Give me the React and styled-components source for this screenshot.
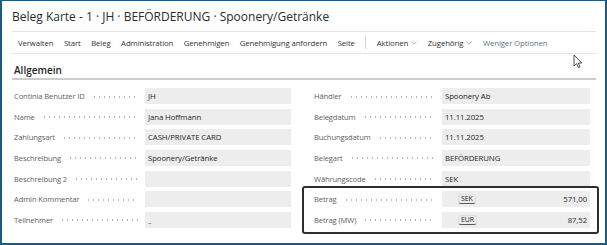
import React from "react";
import styled, { createGlobalStyle } from "styled-components";

const Global = createGlobalStyle`
  html, body {
    margin: 0;
    padding: 0;
    background: #ffffff;
  }
  body {
    font-family: "Open Sans", "Noto Sans", sans-serif;
  }
`;

const Frame = styled.div`
  position: relative;
  width: 607px;
  height: 245px;
  box-sizing: border-box;
  border: 2px solid #1f5a7c;
  border-top-width: 1px;
  background: #ffffff;
  overflow: hidden;
  padding: 0 9px 0 10px;
`;

const Title = styled.div`
  height: 30px;
  display: flex;
  align-items: center;
  font-size: 12px;
  color: #2b2b2b;
  white-space: nowrap;
`;

const Toolbar = styled.div`
  display: flex;
  align-items: center;
  height: 21px;
  border-top: 1px solid #e4e4e4;
  border-bottom: 1px solid #e4e4e4;
  padding-left: 6px;
  gap: 10.5px;
  font-size: 7.8px;
  letter-spacing: -0.12px;
  color: #333333;
  white-space: nowrap;
`;

const ToolItem = styled.span`
  display: inline-flex;
  align-items: center;
  gap: 3px;
  color: ${(p) => (p.$muted ? "#5f7387" : "#333333")};
`;

const Chevron = styled.svg`
  width: 6px;
  height: 4px;
`;

const Divider = styled.span`
  width: 1px;
  height: 13px;
  background: #d6d6d6;
`;

const SectionHead = styled.div`
  margin-top: 8px;
  height: 16px;
  display: flex;
  align-items: center;
  padding-left: 2px;
  font-size: 10px;
  font-weight: 600;
  color: #262626;
  border-bottom: 2px solid #c9cdd1;
`;

const Columns = styled.div`
  display: grid;
  grid-template-columns: 279px 278px;
  column-gap: 21px;
  margin-top: 8px;
`;

const Column = styled.div`
  display: flex;
  flex-direction: column;
  gap: 4.67px;
`;

const Row = styled.div`
  display: flex;
  align-items: center;
  height: 16px;
`;

const Label = styled.div`
  width: ${(p) => p.$w}px;
  flex: none;
  display: flex;
  align-items: center;
  padding-left: 2px;
  box-sizing: border-box;
  font-size: 7.6px;
  letter-spacing: -0.12px;
  color: #616161;
  white-space: nowrap;
  overflow: hidden;

  &::after {
    content: "";
    flex: 1;
    margin: 1px 7px 0 7px;
    height: 2px;
    background-image: radial-gradient(circle, #b4b4b4 0.55px, transparent 0.75px);
    background-size: 5px 2px;
    background-repeat: repeat-x;
  }
`;

const Field = styled.div`
  flex: 1;
  height: 16px;
  display: flex;
  align-items: center;
  justify-content: space-between;
  padding: 0 3px 0 3px;
  box-sizing: border-box;
  background: #ededed;
  font-size: 7.8px;
  letter-spacing: -0.1px;
  color: #1f1f1f;
  white-space: nowrap;
`;

const Blank = styled.span`
  color: #0f7c8c;
  font-weight: 700;
`;

const Currency = styled.span`
  margin-left: 13px;
  padding: 0 2px;
  border: 1px solid #dedede;
  border-bottom-color: #5a5a5a;
  border-radius: 3px;
  font-size: 7px;
  line-height: 8px;
  color: #222222;
`;

const Highlight = styled.div`
  display: flex;
  flex-direction: column;
  gap: 4.67px;
  margin: -5px -9px -6px -10px;
  padding: 3px 7px 4px 8px;
  border: 2px solid #2e2e2e;
  border-radius: 3px;
`;

const Cursor = styled.svg`
  position: absolute;
  left: 571px;
  top: 53px;
  width: 10px;
  height: 15px;
`;

const left = [
  ["Continia Benutzer ID", "JH"],
  ["Name", "Jana Hoffmann"],
  ["Zahlungsart", "CASH/PRIVATE CARD"],
  ["Beschreibung", "Spoonery/Getränke"],
  ["Beschreibung 2", ""],
  ["Admin Kommentar", ""],
  ["Teilnehmer", "_"],
];

const right = [
  ["Händler", "Spoonery Ab"],
  ["Belegdatum", "11.11.2025"],
  ["Buchungsdatum", "11.11.2025"],
  ["Belegart", "BEFÖRDERUNG"],
  ["Währungscode", "SEK"],
];

const amounts = [
  ["Betrag", "SEK", "571,00"],
  ["Betrag (MW)", "EUR", "87,52"],
];

const tools = [
  "Verwalten",
  "Start",
  "Beleg",
  "Administration",
  "Genehmigen",
  "Genehmigung anfordern",
  "Seite",
];

function Down() {
  return (
    <Chevron viewBox="0 0 6 4">
      <path d="M0.5 0.5 L3 3.2 L5.5 0.5" fill="none" stroke="#9a9a9a" strokeWidth="0.7" />
    </Chevron>
  );
}

export default function App() {
  return (
    <>
      <Global />
      <Frame>
        <Title>Beleg Karte - 1 · JH · BEFÖRDERUNG · Spoonery/Getränke</Title>
        <Toolbar>
          {tools.map((t) => (
            <ToolItem key={t}>{t}</ToolItem>
          ))}
          <Divider />
          <ToolItem>
            Aktionen <Down />
          </ToolItem>
          <ToolItem>
            Zugehörig <Down />
          </ToolItem>
          <ToolItem $muted>Weniger Optionen</ToolItem>
        </Toolbar>
        <SectionHead>Allgemein</SectionHead>
        <Columns>
          <Column>
            {left.map(([l, v]) => (
              <Row key={l}>
                <Label $w={133}>{l}</Label>
                <Field>{v === "_" ? <Blank>_</Blank> : v}</Field>
              </Row>
            ))}
          </Column>
          <Column>
            {right.map(([l, v]) => (
              <Row key={l}>
                <Label $w={130}>{l}</Label>
                <Field>{v}</Field>
              </Row>
            ))}
            <Highlight>
              {amounts.map(([l, c, v]) => (
                <Row key={l}>
                  <Label $w={130}>{l}</Label>
                  <Field>
                    <Currency>{c}</Currency>
                    <span>{v}</span>
                  </Field>
                </Row>
              ))}
            </Highlight>
          </Column>
        </Columns>
        <Cursor viewBox="0 0 10 15">
          <path
            d="M1 1 L1 12 L3.6 9.6 L5.4 13.6 L7 12.9 L5.3 9 L8.8 9 Z"
            fill="#ffffff"
            stroke="#222222"
            strokeWidth="0.8"
            strokeLinejoin="round"
          />
        </Cursor>
      </Frame>
    </>
  );
}
